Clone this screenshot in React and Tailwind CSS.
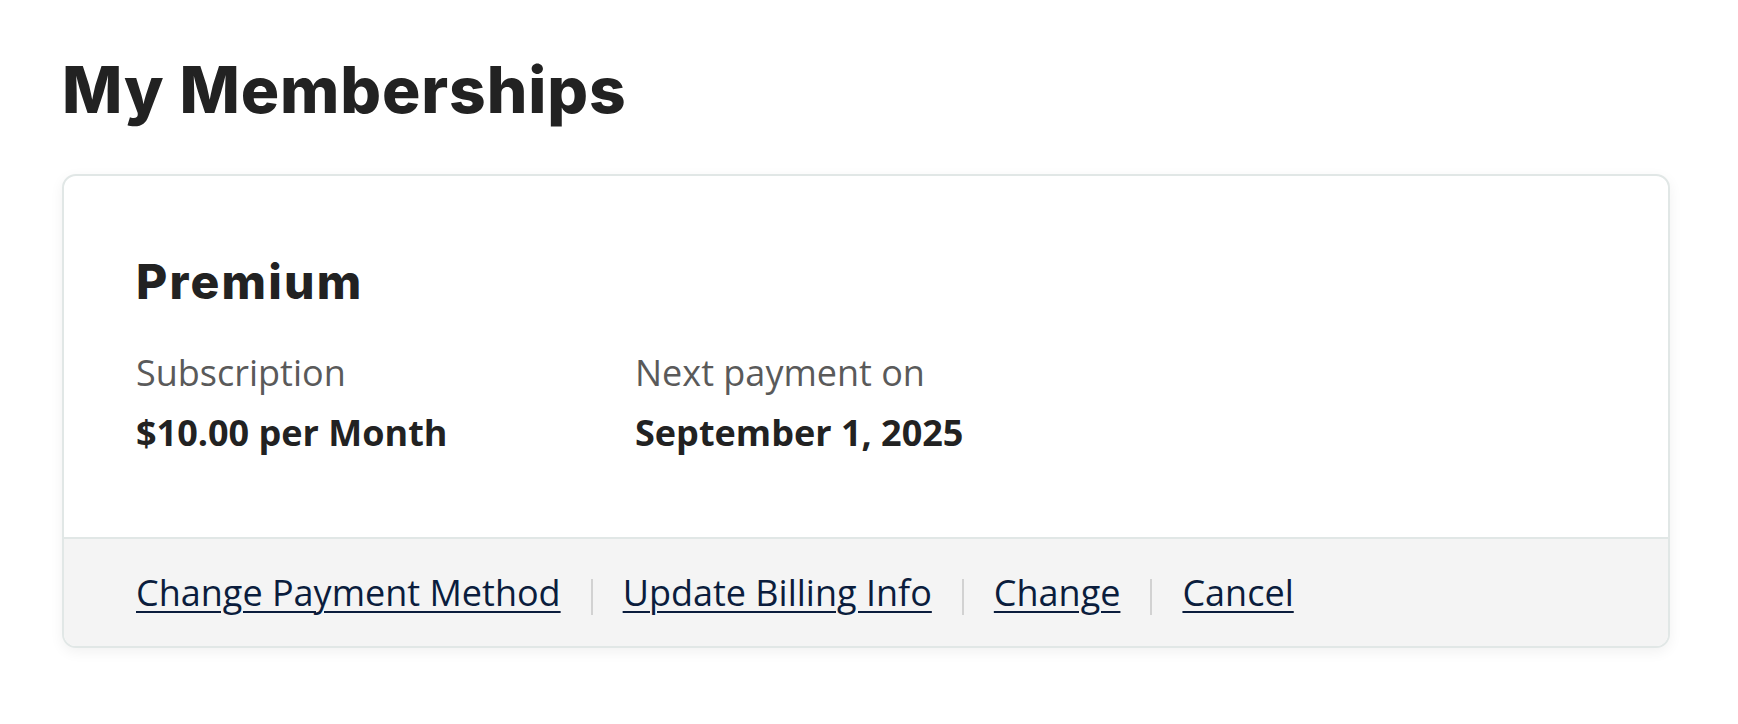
const links = ["Change Payment Method", "Update Billing Info", "Change", "Cancel"];

export default function App() {
  return (
    <div className="min-h-screen bg-white pl-[62px] pr-[68px] pt-[58px] font-['Open_Sans',sans-serif]">
      <h1 className="font-['Inter',sans-serif] text-[64px] leading-[64px] font-extrabold tracking-[0.9px] text-[#222222]">
        My Memberships
      </h1>

      <div className="mt-[52px] rounded-[14px] border-2 border-[#e1e7e6] bg-white shadow-[0_4px_14px_rgba(0,0,0,0.06)] overflow-hidden">
        <div className="px-[72px] pt-[78px] pb-[80px]">
          <h2 className="font-['Inter',sans-serif] text-[48px] leading-[56px] font-extrabold tracking-[2.2px] text-[#222222]">
            Premium
          </h2>

          <div className="mt-[39px] flex">
            <div className="w-[499px]">
              <div className="text-[36px] leading-[48px] text-[#5a5a5a]">Subscription</div>
              <div className="mt-[12px] text-[36px] leading-[48px] font-bold text-[#222222]">
                $10.00 per Month
              </div>
            </div>
            <div>
              <div className="text-[36px] leading-[48px] text-[#5a5a5a]">Next payment on</div>
              <div className="mt-[12px] text-[36px] leading-[48px] font-bold text-[#222222]">
                September 1, 2025
              </div>
            </div>
          </div>
        </div>

        <div className="border-t-2 border-[#e1e7e6] bg-[#f4f4f4] px-[72px] h-[109px] flex items-center">
          {links.map((label, i) => (
            <div key={label} className="flex items-center">
              {i > 0 && <span className="mx-[30px] mt-[8px] h-[36px] w-[2px] bg-[#d2d2d2]" />}
              <a href="#" className="text-[36px] leading-[48px] text-[#0b1d3d] underline decoration-2 underline-offset-[5px]">
                {label}
              </a>
            </div>
          ))}
        </div>
      </div>
    </div>
  );
}
